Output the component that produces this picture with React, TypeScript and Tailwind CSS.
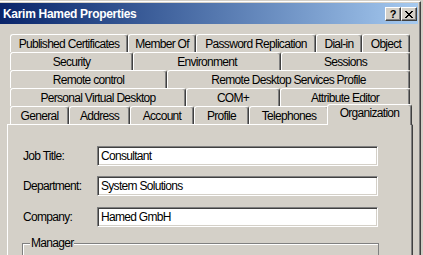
import React from 'react';

type Tab = { label: string; w: string; selected?: boolean };

const tabRows: Tab[][] = [
    [
        { label: 'Published Certificates', w: 'w-[118px]' },
        { label: 'Member Of', w: 'w-[68px]' },
        { label: 'Password Replication', w: 'w-[120px]' },
        { label: 'Dial-in', w: 'w-[46px]' },
        { label: 'Object', w: 'w-[48px]' },
    ],
    [
        { label: 'Security', w: 'w-[123px]' },
        { label: 'Environment', w: 'w-[148px]' },
        { label: 'Sessions', w: 'w-[129px]' },
    ],
    [
        { label: 'Remote control', w: 'w-[157px]' },
        { label: 'Remote Desktop Services Profile', w: 'w-[243px]' },
    ],
    [
        { label: 'Personal Virtual Desktop', w: 'w-[176px]' },
        { label: 'COM+', w: 'w-[94px]' },
        { label: 'Attribute Editor', w: 'w-[130px]' },
    ],
    [
        { label: 'General', w: 'w-[59px]' },
        { label: 'Address', w: 'w-[61px]' },
        { label: 'Account', w: 'w-[64px]' },
        { label: 'Profile', w: 'w-[55px]' },
        { label: 'Telephones', w: 'w-[80px]' },
        { label: 'Organization', w: 'w-[85px]', selected: true },
    ],
];

const fields = [
    { label: 'Job Title:', value: 'Consultant', gap: '' },
    { label: 'Department:', value: 'System Solutions', gap: 'mt-[10px]' },
    { label: 'Company:', value: 'Hamed GmbH', gap: 'mt-[11px]' },
];

const CaptionButton: React.FC<{ children: React.ReactNode }> = ({ children }) => (
    <div className="w-[16px] h-[14px] flex items-center justify-center bg-[#d4d0c8] border-t border-l border-white border-r border-b border-r-[#404040] border-b-[#404040] shadow-[inset_-1px_-1px_0_#808080] text-black">
        {children}
    </div>
);

const TabItem: React.FC<{ tab: Tab }> = ({ tab }) => {
    if (tab.selected) {
        return (
            <div className={`${tab.w} relative z-10 -ml-[2px] -mr-[2px] -mt-[2px] h-[21px] flex justify-center pt-[1px] bg-[#d4d0c8] border-t border-l border-r border-white border-r-[#404040] rounded-t-[3px] shadow-[inset_-1px_0_0_#808080]`}>
                {tab.label}
            </div>
        );
    }
    return (
        <div className={`${tab.w} h-[18px] flex items-center justify-center bg-[#d4d0c8] border-t border-l border-r border-white border-r-[#404040] rounded-t-[3px] shadow-[inset_-1px_0_0_#808080]`}>
            {tab.label}
        </div>
    );
};

export default function App() {
    return (
        <div className="w-[423px] h-[255px] overflow-hidden bg-[#d4d0c8] pt-[1px] text-[12px] leading-[14px] tracking-[-0.7px] text-black font-['Liberation_Sans',Arial,sans-serif]">
            <div className="w-[421px] h-[260px] border-t border-white pt-[1px] border-r border-r-[#404040] shadow-[inset_-1px_0_0_#808080]">
                {/* Title bar */}
                <div className="w-[418px] h-[21px] flex items-center justify-between pl-[3px] pr-[1px] bg-linear-to-r from-[#0a246a] to-[#a6caf0]">
                    <span className="text-white font-bold text-[12px] tracking-[-0.3px]">Karim Hamed Properties</span>
                    <div className="flex mt-[1px]">
                        <CaptionButton>
                            <span className="font-bold text-[11px] leading-[11px] tracking-normal">?</span>
                        </CaptionButton>
                        <CaptionButton>
                            <svg width="8" height="7" viewBox="0 0 8 7" fill="#000">
                                <path d="M0 0h2v1H0zM6 0h2v1H6zM1 1h2v1H1zM5 1h2v1H5zM2 2h4v1H2zM3 3h2v1H3zM2 4h4v1H2zM1 5h2v1H1zM5 5h2v1H5zM0 6h2v1H0zM6 6h2v1H6z" />
                            </svg>
                        </CaptionButton>
                    </div>
                </div>

                {/* Tab rows */}
                <div className="mt-[10px] ml-[10px] w-[400px] flex flex-col">
                    {tabRows.map((row, i) => (
                        <div key={i} className="flex h-[18px]">
                            {row.map((tab) => (
                                <TabItem key={tab.label} tab={tab} />
                            ))}
                        </div>
                    ))}
                </div>

                {/* Tab page */}
                <div className="ml-[7px] w-[406px] h-[140px] border-t border-l border-r border-white border-r-[#404040] shadow-[inset_-1px_0_0_#808080] pl-[15px] pt-[21px]">
                    {fields.map((f) => (
                        <div key={f.label} className={`flex items-center ${f.gap}`}>
                            <div className="w-[74px]">{f.label}</div>
                            <div className="w-[281px] h-[20px] flex items-center pl-[3px] bg-white border-t border-l border-r border-b border-t-[#808080] border-l-[#808080] border-r-white border-b-white shadow-[inset_1px_1px_0_#404040,inset_-1px_-1px_0_#d4d0c8]">
                                {f.value}
                            </div>
                        </div>
                    ))}

                    <fieldset className="mt-[9px] -ml-[1px] w-[357px] h-[40px] border border-[#808080] shadow-[inset_1px_1px_0_#fff]">
                        <legend className="ml-[7px] px-[1px] bg-[#d4d0c8]">Manager</legend>
                    </fieldset>
                </div>
            </div>
        </div>
    );
}
